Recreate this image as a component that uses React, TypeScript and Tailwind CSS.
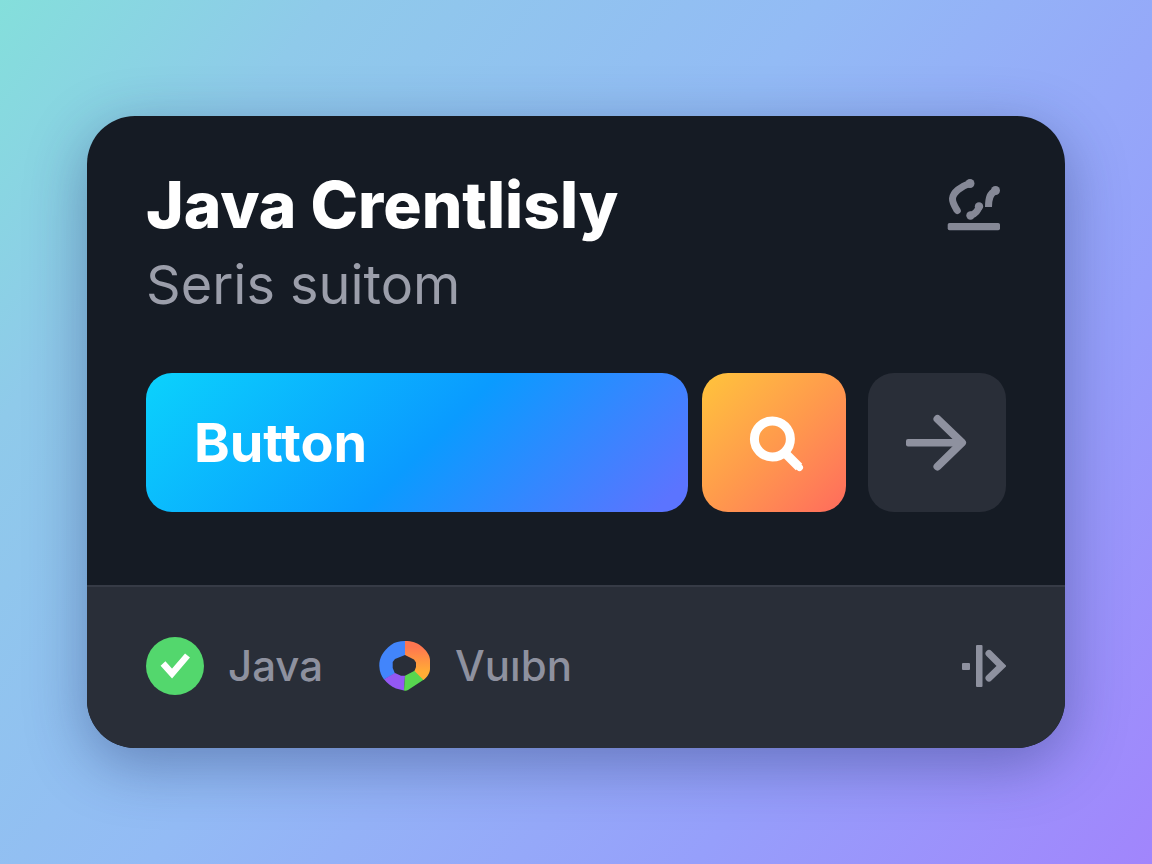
import { ReactNode } from "react";

interface FooterItemProps {
    icon: ReactNode;
    label: string;
}

function SketchIcon() {
    return (
        <svg className="w-16 h-16" viewBox="0 0 64 64" fill="none" stroke="currentColor" strokeWidth={7} strokeLinecap="round" aria-hidden="true">
            <path d="M27.500 11.500C19 14.500 11 20 10.500 26.500C10.300 31 12.500 34 15.300 38.500" />
            <path d="M37 34.500C36 39 33 42 28.500 43.500" />
            <path strokeLinecap="butt" d="M53.500 19C48 21 46.500 26 46.500 35" />
            <g fill="currentColor" stroke="none">
                <circle cx="28" cy="11.500" r="4.500" />
                <circle cx="37" cy="34.500" r="4.200" />
                <circle cx="28.500" cy="43.500" r="4.200" />
                <circle cx="53.500" cy="18.500" r="4.500" />
                <rect x="5.700" y="51" width="52.300" height="7.300" rx="1.800" />
            </g>
        </svg>
    );
}

function SearchIcon() {
    return (
        <svg className="w-16 h-16" viewBox="0 0 64 64" fill="none" stroke="currentColor" aria-hidden="true">
            <circle cx="30.400" cy="28" r="18" strokeWidth={9} />
            <path d="M42 41L57 56" strokeWidth={9} />
            <path d="M55 54L57.500 56.500" strokeWidth={7} strokeLinecap="round" />
        </svg>
    );
}

function ArrowIcon() {
    return (
        <svg className="w-16 h-16" viewBox="0 0 64 64" fill="none" stroke="currentColor" aria-hidden="true">
            <path d="M32.500 8L57 31.700L32.500 55.500" strokeWidth={8} strokeLinecap="round" strokeLinejoin="round" />
            <rect x="1" y="28" width="54" height="7.500" rx="2" fill="currentColor" stroke="none" />
        </svg>
    );
}

function CheckIcon() {
    return (
        <svg className="w-[58px] h-[58px]" viewBox="0 0 58 58" fill="none" aria-hidden="true">
            <circle cx="29" cy="29" r="29" fill="#53d76d" />
            <path d="M17 26.500L26 36.500L41.500 18.500" stroke="#fff" strokeWidth={6.5} />
        </svg>
    );
}

function RingIcon() {
    return (
        <svg className="w-[52px] h-[50px]" viewBox="0 0 52 50" aria-hidden="true">
            <defs>
                <linearGradient id="ring-warm" x1="0" y1="0" x2="0" y2="1">
                    <stop offset="0.150" stopColor="#ff7650" />
                    <stop offset="0.800" stopColor="#ffad35" />
                </linearGradient>
            </defs>
            <path fill="#4285fb" d="M26 0C20 0 16 1 12 4C4 10 0 17 0.300 25C0.500 31 2.500 35 5 38.500L16 32.500L13.700 27V21L16 18L26 14Z" />
            <path fill="#9458f3" d="M5 38.300C8 42 12 45.500 17 47.500L25 49.500L26 34.700L22 34.700L16 32Z" />
            <path fill="#57d64f" d="M26 34.700L36 29.500L45 38.500L29 49C28 49.700 26.500 50 25 49.500Z" />
            <path fill="url(#ring-warm)" d="M26 0C33 0 38 1.500 42 5C47 9 51 14 51 19V28C51 32 48 36.500 44.500 39L35.500 30L37 26V21.500L35 18.500L26 14Z" />
        </svg>
    );
}

function StepIcon() {
    return (
        <svg className="w-12 h-12" viewBox="0 0 48 48" fill="none" aria-hidden="true">
            <rect x="4" y="21" width="8" height="7" rx="1" fill="currentColor" />
            <rect x="18" y="3" width="6.500" height="42" rx="1" fill="currentColor" />
            <path d="M31 11.500L43.500 24L31 36" stroke="currentColor" strokeWidth={7} strokeLinecap="round" strokeLinejoin="miter" />
        </svg>
    );
}

function FooterItem({ icon, label }: FooterItemProps) {
    return (
        <div className="flex items-center gap-6">
            {icon}
            <span className="text-[42px] leading-[48px] font-medium">{label}</span>
        </div>
    );
}

export default function App() {
    return (
        <main className="min-h-screen flex items-center px-[87px] py-12 font-['Inter',sans-serif] bg-[linear-gradient(128deg,#84dfdb_0%,#8fcaea_18%,#93bbf5_45%,#969ffb_75%,#a185fc_100%)]">
            <section className="w-full rounded-[48px] overflow-hidden bg-[#151b24] text-[#8e919f] shadow-[0_16px_60px_rgba(30,45,100,0.4)]">
                <div className="px-[59px] pt-[53px] pb-[73px]">
                    <header className="flex items-start justify-between">
                        <div className="flex flex-col gap-3">
                            <h1 className="text-[64px] leading-[72px] font-extrabold text-white">Java Crentlisly</h1>
                            <p className="text-[54px] leading-[64px] text-[#9b9eaa]">Seris suitom</p>
                        </div>
                        <button type="button" aria-label="Sketch" className="mt-[3px] text-[#858896]">
                            <SketchIcon />
                        </button>
                    </header>

                    <div className="mt-14 flex h-[139px]">
                        <button
                            type="button"
                            className="flex-1 rounded-[26px] pl-12 text-left text-[54px] font-bold text-white bg-[linear-gradient(135deg,#0bd2fc_0%,#0a9bff_52%,#5b74ff_95%)]"
                        >
                            Button
                        </button>
                        <button
                            type="button"
                            aria-label="Search"
                            className="ml-[14px] w-36 shrink-0 flex items-center justify-center rounded-[26px] text-white bg-linear-to-br from-[#ffc43a] via-[#ff9a4c] to-[#ff6a5c]"
                        >
                            <SearchIcon />
                        </button>
                        <button
                            type="button"
                            aria-label="Next"
                            className="ml-[22px] w-[138px] shrink-0 flex items-center justify-center rounded-[26px] bg-[#292e38]"
                        >
                            <ArrowIcon />
                        </button>
                    </div>
                </div>

                <footer className="flex items-center justify-between px-[59px] pt-[50px] pb-[53px] border-t-2 border-[#363b46] bg-[#292e38]">
                    <div className="flex items-center gap-14">
                        <FooterItem icon={<CheckIcon />} label="Java" />
                        <FooterItem icon={<RingIcon />} label="Vuıbn" />
                    </div>
                    <button type="button" aria-label="Step forward">
                        <StepIcon />
                    </button>
                </footer>
            </section>
        </main>
    );
}
